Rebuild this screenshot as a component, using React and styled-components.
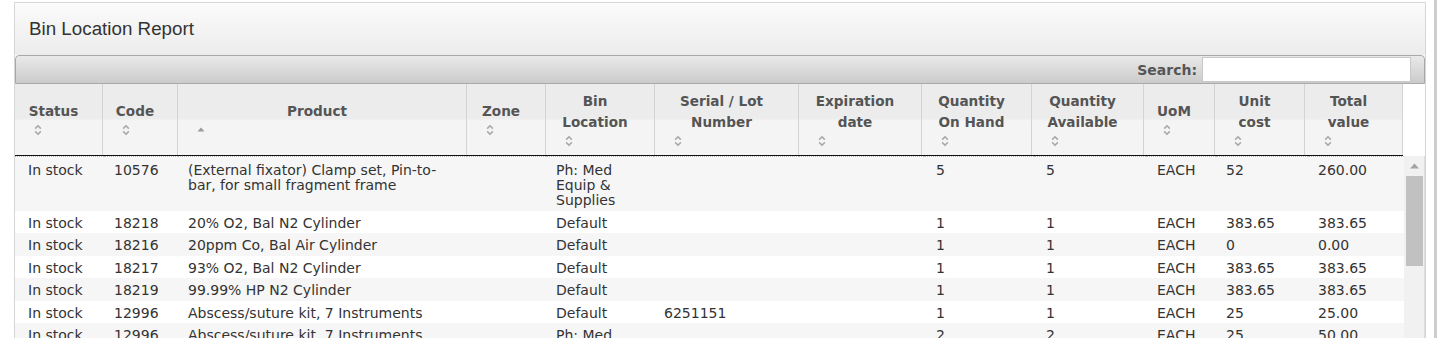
import React from 'react';
import styled, { createGlobalStyle } from 'styled-components';

const GlobalStyle = createGlobalStyle`
  html, body {
    margin: 0;
    padding: 0;
    background: #fff;
    overflow: hidden;
  }
  body {
    font-family: "DejaVu Sans", Verdana, sans-serif;
    font-size: 14px;
    color: #333;
  }
`;

const Page = styled.div`
  display: flex;
  height: 338px;
  overflow: hidden;
`;

const Main = styled.div`
  flex: 1;
  padding: 2px 8px 0 14px;
`;

const WindowEdge = styled.div`
  width: 4px;
  background: #cdcdcd;
`;

const Panel = styled.div`
  border: 1px solid #d6d6d6;
  border-bottom: none;
  background: #fff;
`;

const PanelHeader = styled.div`
  height: 52px;
  display: flex;
  align-items: center;
  padding: 0 14px;
  background: linear-gradient(to bottom, #fbfbfb 0%, #ececec 100%);
`;

const Title = styled.h2`
  margin: 0;
  font-family: "Liberation Sans", Arial, sans-serif;
  font-weight: normal;
  font-size: 18.8px;
  color: #333;
`;

const Toolbar = styled.div`
  height: 27px;
  display: flex;
  justify-content: flex-end;
  align-items: center;
  gap: 5px;
  padding: 0 13px 0 8px;
  border: 1px solid #a9a9a9;
  border-radius: 4px 4px 0 0;
  background: linear-gradient(to bottom, #e9e9e9 0%, #cbcbcb 100%);
`;

const SearchLabel = styled.label`
  font-weight: bold;
  font-size: 14px;
  color: #555;
`;

const SearchInput = styled.input`
  width: 209px;
  height: 25px;
  box-sizing: border-box;
  margin: -1px 0 0;
  border: 1px solid #c8c8c8;
  background: #fff;
  outline: none;
`;

const HeadRow = styled.div`
  display: flex;
  height: 71px;
  border-bottom: 1px solid #111;
  margin-right: 22px;
  background: linear-gradient(to bottom, #ececec 0%, #ececec 48%, #f4f4f4 52%, #f4f4f4 100%);
`;

const HeadCell = styled.div`
  width: ${(p) => p.$w}px;
  flex: none;
  box-sizing: border-box;
  display: flex;
  flex-direction: column;
  justify-content: center;
  padding: 0 20px 0 10px;
  border-right: 1px solid #d3d3d3;
  font-weight: bold;
  font-size: 13.6px;
  line-height: 21px;
  color: #555;
  text-align: center;
`;

const SortBox = styled.div`
  height: 16px;
  display: flex;
  align-items: center;
  padding-left: 9px;
`;

const SortBoth = () => (
  <svg width="8" height="12" viewBox="0 0 8 12">
    <path d="M1.2 4.6 L4 1.8 L6.8 4.6" fill="none" stroke="#a8a8a8" strokeWidth="1.6" />
    <path d="M1.2 7.4 L4 10.2 L6.8 7.4" fill="none" stroke="#a8a8a8" strokeWidth="1.6" />
  </svg>
);

const SortAsc = () => (
  <svg width="8" height="12" viewBox="0 0 8 12">
    <path d="M0.5 7.5 L4 3.5 L7.5 7.5 Z" fill="#9a9a9a" />
  </svg>
);

const BodyWrap = styled.div`
  display: flex;
  height: 200px;
  overflow: hidden;
`;

const BodyTable = styled.table`
  width: 1389px;
  flex: none;
  table-layout: fixed;
  border-collapse: collapse;
  border-top: 1px dotted #bbb;
  align-self: flex-start;
`;

const Row = styled.tr`
  background: ${(p) => (p.$odd ? '#f6f6f6' : '#fff')};
`;

const Cell = styled.td`
  vertical-align: top;
  padding: ${(p) => (p.$tall ? '6px 10px 3px' : '5px 10px 2.4px')};
  padding-left: ${(p) => p.$pl || 10}px;
  line-height: 15px;
  font-size: 14px;
  color: #333;
  overflow: hidden;
`;

const ScrollTrack = styled.div`
  flex: 1;
  display: flex;
  flex-direction: column;
  align-items: center;
  background: #f1f1f1;
  border-right: 1px solid #dcdcdc;
`;

const ScrollArrow = styled.div`
  height: 20px;
  display: flex;
  align-items: center;
`;

const ScrollThumb = styled.div`
  width: 17px;
  height: 90px;
  background: #c1c1c1;
`;

const columns = [
  { label: ['Status'], hw: 88, bw: 89, pl: 13 },
  { label: ['Code'], hw: 75, bw: 74 },
  { label: ['Product'], hw: 289, bw: 289, sorted: true },
  { label: ['Zone'], hw: 79, bw: 79 },
  { label: ['Bin', 'Location'], hw: 109, bw: 108 },
  { label: ['Serial / Lot', 'Number'], hw: 144, bw: 145 },
  { label: ['Expiration', 'date'], hw: 123, bw: 125 },
  { label: ['Quantity', 'On Hand'], hw: 110, bw: 110, pl: 12 },
  { label: ['Quantity', 'Available'], hw: 112, bw: 112, pl: 12 },
  { label: ['UoM'], hw: 71, bw: 70, pl: 11 },
  { label: ['Unit', 'cost'], hw: 90, bw: 92 },
  { label: ['Total', 'value'], hw: 98, bw: 96 },
];

const rows = [
  ['In stock', '10576', '(External fixator) Clamp set, Pin-to-bar, for small fragment frame', '', 'Ph: Med Equip & Supplies', '', '', '5', '5', 'EACH', '52', '260.00'],
  ['In stock', '18218', '20% O2, Bal N2 Cylinder', '', 'Default', '', '', '1', '1', 'EACH', '383.65', '383.65'],
  ['In stock', '18216', '20ppm Co, Bal Air Cylinder', '', 'Default', '', '', '1', '1', 'EACH', '0', '0.00'],
  ['In stock', '18217', '93% O2, Bal N2 Cylinder', '', 'Default', '', '', '1', '1', 'EACH', '383.65', '383.65'],
  ['In stock', '18219', '99.99% HP N2 Cylinder', '', 'Default', '', '', '1', '1', 'EACH', '383.65', '383.65'],
  ['In stock', '12996', 'Abscess/suture kit, 7 Instruments', '', 'Default', '6251151', '', '1', '1', 'EACH', '25', '25.00'],
  ['In stock', '12996', 'Abscess/suture kit, 7 Instruments', '', 'Ph: Med Equip & Supplies', '', '', '2', '2', 'EACH', '25', '50.00'],
];

export default function App() {
  return (
    <Page>
      <GlobalStyle />
      <Main>
        <Panel>
          <PanelHeader>
            <Title>Bin Location Report</Title>
          </PanelHeader>
          <Toolbar>
            <SearchLabel htmlFor="search">Search:</SearchLabel>
            <SearchInput id="search" type="text" />
          </Toolbar>
          <HeadRow>
            {columns.map((c, i) => (
              <HeadCell key={i} $w={c.hw}>
                {c.label.map((l) => (
                  <div key={l}>{l}</div>
                ))}
                <SortBox>{c.sorted ? <SortAsc /> : <SortBoth />}</SortBox>
              </HeadCell>
            ))}
          </HeadRow>
          <BodyWrap>
            <BodyTable>
              <colgroup>
                {columns.map((c, i) => (
                  <col key={i} style={{ width: c.bw }} />
                ))}
              </colgroup>
              <tbody>
                {rows.map((r, ri) => (
                  <Row key={ri} $odd={ri % 2 === 0}>
                    {r.map((v, ci) => (
                      <Cell key={ci} $pl={columns[ci].pl} $tall={ri === 0}>
                        {v}
                      </Cell>
                    ))}
                  </Row>
                ))}
              </tbody>
            </BodyTable>
            <ScrollTrack>
              <ScrollArrow>
                <svg width="9" height="6" viewBox="0 0 9 6">
                  <path d="M0 5.5 L4.5 0.5 L9 5.5 Z" fill="#a3a3a3" />
                </svg>
              </ScrollArrow>
              <ScrollThumb />
            </ScrollTrack>
          </BodyWrap>
        </Panel>
      </Main>
      <WindowEdge />
    </Page>
  );
}
